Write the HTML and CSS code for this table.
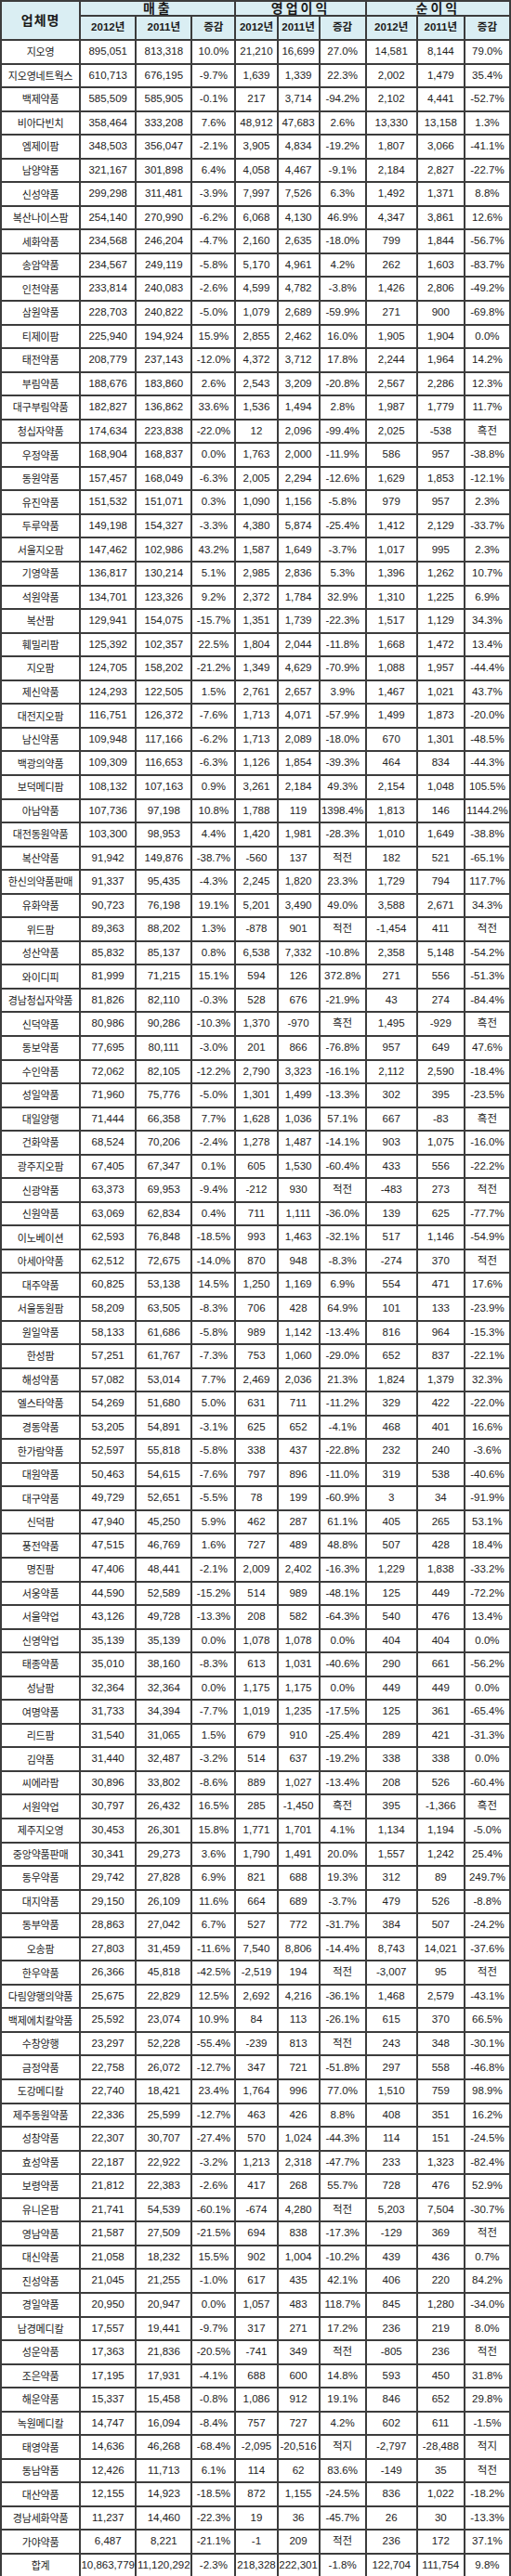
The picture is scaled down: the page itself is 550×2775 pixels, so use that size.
FILE: index.html
```html
<!DOCTYPE html>
<html lang="ko">
<head>
<meta charset="utf-8">
<title>의약품 유통업체 실적</title>
<link rel="stylesheet" href="styles.css">
</head>
<body>
<table class="tbl">
<colgroup>
<col class="c-name"><col class="c-a"><col class="c-a"><col class="c-b"><col class="c-c"><col class="c-c"><col class="c-d"><col class="c-e"><col class="c-f"><col class="c-g">
</colgroup>
<thead>
<tr class="h1"><th rowspan="2" class="hn">업체명</th><th colspan="3" class="hg">매출</th><th colspan="3" class="hg">영업이익</th><th colspan="3" class="hg">순이익</th></tr>
<tr class="h2"><th>2012년</th><th>2011년</th><th>증감</th><th>2012년</th><th>2011년</th><th>증감</th><th>2012년</th><th>2011년</th><th>증감</th></tr>
</thead>
<tbody>
<tr><td class="n">지오영</td><td>895,051</td><td>813,318</td><td>10.0%</td><td>21,210</td><td>16,699</td><td>27.0%</td><td>14,581</td><td>8,144</td><td>79.0%</td></tr>
<tr><td class="n">지오영네트웍스</td><td>610,713</td><td>676,195</td><td>-9.7%</td><td>1,639</td><td>1,339</td><td>22.3%</td><td>2,002</td><td>1,479</td><td>35.4%</td></tr>
<tr><td class="n">백제약품</td><td>585,509</td><td>585,905</td><td>-0.1%</td><td>217</td><td>3,714</td><td>-94.2%</td><td>2,102</td><td>4,441</td><td>-52.7%</td></tr>
<tr><td class="n">비아다빈치</td><td>358,464</td><td>333,208</td><td>7.6%</td><td>48,912</td><td>47,683</td><td>2.6%</td><td>13,330</td><td>13,158</td><td>1.3%</td></tr>
<tr><td class="n">엠제이팜</td><td>348,503</td><td>356,047</td><td>-2.1%</td><td>3,905</td><td>4,834</td><td>-19.2%</td><td>1,807</td><td>3,066</td><td>-41.1%</td></tr>
<tr><td class="n">남양약품</td><td>321,167</td><td>301,898</td><td>6.4%</td><td>4,058</td><td>4,467</td><td>-9.1%</td><td>2,184</td><td>2,827</td><td>-22.7%</td></tr>
<tr><td class="n">신성약품</td><td>299,298</td><td>311,481</td><td>-3.9%</td><td>7,997</td><td>7,526</td><td>6.3%</td><td>1,492</td><td>1,371</td><td>8.8%</td></tr>
<tr><td class="n">복산나이스팜</td><td>254,140</td><td>270,990</td><td>-6.2%</td><td>6,068</td><td>4,130</td><td>46.9%</td><td>4,347</td><td>3,861</td><td>12.6%</td></tr>
<tr><td class="n">세화약품</td><td>234,568</td><td>246,204</td><td>-4.7%</td><td>2,160</td><td>2,635</td><td>-18.0%</td><td>799</td><td>1,844</td><td>-56.7%</td></tr>
<tr><td class="n">송암약품</td><td>234,567</td><td>249,119</td><td>-5.8%</td><td>5,170</td><td>4,961</td><td>4.2%</td><td>262</td><td>1,603</td><td>-83.7%</td></tr>
<tr><td class="n">인천약품</td><td>233,814</td><td>240,083</td><td>-2.6%</td><td>4,599</td><td>4,782</td><td>-3.8%</td><td>1,426</td><td>2,806</td><td>-49.2%</td></tr>
<tr><td class="n">삼원약품</td><td>228,703</td><td>240,822</td><td>-5.0%</td><td>1,079</td><td>2,689</td><td>-59.9%</td><td>271</td><td>900</td><td>-69.8%</td></tr>
<tr><td class="n">티제이팜</td><td>225,940</td><td>194,924</td><td>15.9%</td><td>2,855</td><td>2,462</td><td>16.0%</td><td>1,905</td><td>1,904</td><td>0.0%</td></tr>
<tr><td class="n">태전약품</td><td>208,779</td><td>237,143</td><td>-12.0%</td><td>4,372</td><td>3,712</td><td>17.8%</td><td>2,244</td><td>1,964</td><td>14.2%</td></tr>
<tr><td class="n">부림약품</td><td>188,676</td><td>183,860</td><td>2.6%</td><td>2,543</td><td>3,209</td><td>-20.8%</td><td>2,567</td><td>2,286</td><td>12.3%</td></tr>
<tr><td class="n">대구부림약품</td><td>182,827</td><td>136,862</td><td>33.6%</td><td>1,536</td><td>1,494</td><td>2.8%</td><td>1,987</td><td>1,779</td><td>11.7%</td></tr>
<tr><td class="n">청십자약품</td><td>174,634</td><td>223,838</td><td>-22.0%</td><td>12</td><td>2,096</td><td>-99.4%</td><td>2,025</td><td>-538</td><td>흑전</td></tr>
<tr><td class="n">우정약품</td><td>168,904</td><td>168,837</td><td>0.0%</td><td>1,763</td><td>2,000</td><td>-11.9%</td><td>586</td><td>957</td><td>-38.8%</td></tr>
<tr><td class="n">동원약품</td><td>157,457</td><td>168,049</td><td>-6.3%</td><td>2,005</td><td>2,294</td><td>-12.6%</td><td>1,629</td><td>1,853</td><td>-12.1%</td></tr>
<tr><td class="n">유진약품</td><td>151,532</td><td>151,071</td><td>0.3%</td><td>1,090</td><td>1,156</td><td>-5.8%</td><td>979</td><td>957</td><td>2.3%</td></tr>
<tr><td class="n">두루약품</td><td>149,198</td><td>154,327</td><td>-3.3%</td><td>4,380</td><td>5,874</td><td>-25.4%</td><td>1,412</td><td>2,129</td><td>-33.7%</td></tr>
<tr><td class="n">서울지오팜</td><td>147,462</td><td>102,986</td><td>43.2%</td><td>1,587</td><td>1,649</td><td>-3.7%</td><td>1,017</td><td>995</td><td>2.3%</td></tr>
<tr><td class="n">기영약품</td><td>136,817</td><td>130,214</td><td>5.1%</td><td>2,985</td><td>2,836</td><td>5.3%</td><td>1,396</td><td>1,262</td><td>10.7%</td></tr>
<tr><td class="n">석원약품</td><td>134,701</td><td>123,326</td><td>9.2%</td><td>2,372</td><td>1,784</td><td>32.9%</td><td>1,310</td><td>1,225</td><td>6.9%</td></tr>
<tr><td class="n">복산팜</td><td>129,941</td><td>154,075</td><td>-15.7%</td><td>1,351</td><td>1,739</td><td>-22.3%</td><td>1,517</td><td>1,129</td><td>34.3%</td></tr>
<tr><td class="n">훼밀리팜</td><td>125,392</td><td>102,357</td><td>22.5%</td><td>1,804</td><td>2,044</td><td>-11.8%</td><td>1,668</td><td>1,472</td><td>13.4%</td></tr>
<tr><td class="n">지오팜</td><td>124,705</td><td>158,202</td><td>-21.2%</td><td>1,349</td><td>4,629</td><td>-70.9%</td><td>1,088</td><td>1,957</td><td>-44.4%</td></tr>
<tr><td class="n">제신약품</td><td>124,293</td><td>122,505</td><td>1.5%</td><td>2,761</td><td>2,657</td><td>3.9%</td><td>1,467</td><td>1,021</td><td>43.7%</td></tr>
<tr><td class="n">대전지오팜</td><td>116,751</td><td>126,372</td><td>-7.6%</td><td>1,713</td><td>4,071</td><td>-57.9%</td><td>1,499</td><td>1,873</td><td>-20.0%</td></tr>
<tr><td class="n">남신약품</td><td>109,948</td><td>117,166</td><td>-6.2%</td><td>1,713</td><td>2,089</td><td>-18.0%</td><td>670</td><td>1,301</td><td>-48.5%</td></tr>
<tr><td class="n">백광의약품</td><td>109,309</td><td>116,653</td><td>-6.3%</td><td>1,126</td><td>1,854</td><td>-39.3%</td><td>464</td><td>834</td><td>-44.3%</td></tr>
<tr><td class="n">보덕메디팜</td><td>108,132</td><td>107,163</td><td>0.9%</td><td>3,261</td><td>2,184</td><td>49.3%</td><td>2,154</td><td>1,048</td><td>105.5%</td></tr>
<tr><td class="n">아남약품</td><td>107,736</td><td>97,198</td><td>10.8%</td><td>1,788</td><td>119</td><td>1398.4%</td><td>1,813</td><td>146</td><td>1144.2%</td></tr>
<tr><td class="n">대전동원약품</td><td>103,300</td><td>98,953</td><td>4.4%</td><td>1,420</td><td>1,981</td><td>-28.3%</td><td>1,010</td><td>1,649</td><td>-38.8%</td></tr>
<tr><td class="n">복산약품</td><td>91,942</td><td>149,876</td><td>-38.7%</td><td>-560</td><td>137</td><td>적전</td><td>182</td><td>521</td><td>-65.1%</td></tr>
<tr><td class="n">한신의약품판매</td><td>91,337</td><td>95,435</td><td>-4.3%</td><td>2,245</td><td>1,820</td><td>23.3%</td><td>1,729</td><td>794</td><td>117.7%</td></tr>
<tr><td class="n">유화약품</td><td>90,723</td><td>76,198</td><td>19.1%</td><td>5,201</td><td>3,490</td><td>49.0%</td><td>3,588</td><td>2,671</td><td>34.3%</td></tr>
<tr><td class="n">위드팜</td><td>89,363</td><td>88,202</td><td>1.3%</td><td>-878</td><td>901</td><td>적전</td><td>-1,454</td><td>411</td><td>적전</td></tr>
<tr><td class="n">성산약품</td><td>85,832</td><td>85,137</td><td>0.8%</td><td>6,538</td><td>7,332</td><td>-10.8%</td><td>2,358</td><td>5,148</td><td>-54.2%</td></tr>
<tr><td class="n">와이디피</td><td>81,999</td><td>71,215</td><td>15.1%</td><td>594</td><td>126</td><td>372.8%</td><td>271</td><td>556</td><td>-51.3%</td></tr>
<tr><td class="n">경남청십자약품</td><td>81,826</td><td>82,110</td><td>-0.3%</td><td>528</td><td>676</td><td>-21.9%</td><td>43</td><td>274</td><td>-84.4%</td></tr>
<tr><td class="n">신덕약품</td><td>80,986</td><td>90,286</td><td>-10.3%</td><td>1,370</td><td>-970</td><td>흑전</td><td>1,495</td><td>-929</td><td>흑전</td></tr>
<tr><td class="n">동보약품</td><td>77,695</td><td>80,111</td><td>-3.0%</td><td>201</td><td>866</td><td>-76.8%</td><td>957</td><td>649</td><td>47.6%</td></tr>
<tr><td class="n">수인약품</td><td>72,062</td><td>82,105</td><td>-12.2%</td><td>2,790</td><td>3,323</td><td>-16.1%</td><td>2,112</td><td>2,590</td><td>-18.4%</td></tr>
<tr><td class="n">성일약품</td><td>71,960</td><td>75,776</td><td>-5.0%</td><td>1,301</td><td>1,499</td><td>-13.3%</td><td>302</td><td>395</td><td>-23.5%</td></tr>
<tr><td class="n">대일양행</td><td>71,444</td><td>66,358</td><td>7.7%</td><td>1,628</td><td>1,036</td><td>57.1%</td><td>667</td><td>-83</td><td>흑전</td></tr>
<tr><td class="n">건화약품</td><td>68,524</td><td>70,206</td><td>-2.4%</td><td>1,278</td><td>1,487</td><td>-14.1%</td><td>903</td><td>1,075</td><td>-16.0%</td></tr>
<tr><td class="n">광주지오팜</td><td>67,405</td><td>67,347</td><td>0.1%</td><td>605</td><td>1,530</td><td>-60.4%</td><td>433</td><td>556</td><td>-22.2%</td></tr>
<tr><td class="n">신광약품</td><td>63,373</td><td>69,953</td><td>-9.4%</td><td>-212</td><td>930</td><td>적전</td><td>-483</td><td>273</td><td>적전</td></tr>
<tr><td class="n">신원약품</td><td>63,069</td><td>62,834</td><td>0.4%</td><td>711</td><td>1,111</td><td>-36.0%</td><td>139</td><td>625</td><td>-77.7%</td></tr>
<tr><td class="n">이노베이션</td><td>62,593</td><td>76,848</td><td>-18.5%</td><td>993</td><td>1,463</td><td>-32.1%</td><td>517</td><td>1,146</td><td>-54.9%</td></tr>
<tr><td class="n">아세아약품</td><td>62,512</td><td>72,675</td><td>-14.0%</td><td>870</td><td>948</td><td>-8.3%</td><td>-274</td><td>370</td><td>적전</td></tr>
<tr><td class="n">대주약품</td><td>60,825</td><td>53,138</td><td>14.5%</td><td>1,250</td><td>1,169</td><td>6.9%</td><td>554</td><td>471</td><td>17.6%</td></tr>
<tr><td class="n">서울동원팜</td><td>58,209</td><td>63,505</td><td>-8.3%</td><td>706</td><td>428</td><td>64.9%</td><td>101</td><td>133</td><td>-23.9%</td></tr>
<tr><td class="n">원일약품</td><td>58,133</td><td>61,686</td><td>-5.8%</td><td>989</td><td>1,142</td><td>-13.4%</td><td>816</td><td>964</td><td>-15.3%</td></tr>
<tr><td class="n">한성팜</td><td>57,251</td><td>61,767</td><td>-7.3%</td><td>753</td><td>1,060</td><td>-29.0%</td><td>652</td><td>837</td><td>-22.1%</td></tr>
<tr><td class="n">해성약품</td><td>57,082</td><td>53,014</td><td>7.7%</td><td>2,469</td><td>2,036</td><td>21.3%</td><td>1,824</td><td>1,379</td><td>32.3%</td></tr>
<tr><td class="n">엘스타약품</td><td>54,269</td><td>51,680</td><td>5.0%</td><td>631</td><td>711</td><td>-11.2%</td><td>329</td><td>422</td><td>-22.0%</td></tr>
<tr><td class="n">경동약품</td><td>53,205</td><td>54,891</td><td>-3.1%</td><td>625</td><td>652</td><td>-4.1%</td><td>468</td><td>401</td><td>16.6%</td></tr>
<tr><td class="n">한가람약품</td><td>52,597</td><td>55,818</td><td>-5.8%</td><td>338</td><td>437</td><td>-22.8%</td><td>232</td><td>240</td><td>-3.6%</td></tr>
<tr><td class="n">대원약품</td><td>50,463</td><td>54,615</td><td>-7.6%</td><td>797</td><td>896</td><td>-11.0%</td><td>319</td><td>538</td><td>-40.6%</td></tr>
<tr><td class="n">대구약품</td><td>49,729</td><td>52,651</td><td>-5.5%</td><td>78</td><td>199</td><td>-60.9%</td><td>3</td><td>34</td><td>-91.9%</td></tr>
<tr><td class="n">신덕팜</td><td>47,940</td><td>45,250</td><td>5.9%</td><td>462</td><td>287</td><td>61.1%</td><td>405</td><td>265</td><td>53.1%</td></tr>
<tr><td class="n">풍전약품</td><td>47,515</td><td>46,769</td><td>1.6%</td><td>727</td><td>489</td><td>48.8%</td><td>507</td><td>428</td><td>18.4%</td></tr>
<tr><td class="n">명진팜</td><td>47,406</td><td>48,441</td><td>-2.1%</td><td>2,009</td><td>2,402</td><td>-16.3%</td><td>1,229</td><td>1,838</td><td>-33.2%</td></tr>
<tr><td class="n">서웅약품</td><td>44,590</td><td>52,589</td><td>-15.2%</td><td>514</td><td>989</td><td>-48.1%</td><td>125</td><td>449</td><td>-72.2%</td></tr>
<tr><td class="n">서울약업</td><td>43,126</td><td>49,728</td><td>-13.3%</td><td>208</td><td>582</td><td>-64.3%</td><td>540</td><td>476</td><td>13.4%</td></tr>
<tr><td class="n">신영약업</td><td>35,139</td><td>35,139</td><td>0.0%</td><td>1,078</td><td>1,078</td><td>0.0%</td><td>404</td><td>404</td><td>0.0%</td></tr>
<tr><td class="n">태종약품</td><td>35,010</td><td>38,160</td><td>-8.3%</td><td>613</td><td>1,031</td><td>-40.6%</td><td>290</td><td>661</td><td>-56.2%</td></tr>
<tr><td class="n">성남팜</td><td>32,364</td><td>32,364</td><td>0.0%</td><td>1,175</td><td>1,175</td><td>0.0%</td><td>449</td><td>449</td><td>0.0%</td></tr>
<tr><td class="n">여명약품</td><td>31,733</td><td>34,394</td><td>-7.7%</td><td>1,019</td><td>1,235</td><td>-17.5%</td><td>125</td><td>361</td><td>-65.4%</td></tr>
<tr><td class="n">리드팜</td><td>31,540</td><td>31,065</td><td>1.5%</td><td>679</td><td>910</td><td>-25.4%</td><td>289</td><td>421</td><td>-31.3%</td></tr>
<tr><td class="n">김약품</td><td>31,440</td><td>32,487</td><td>-3.2%</td><td>514</td><td>637</td><td>-19.2%</td><td>338</td><td>338</td><td>0.0%</td></tr>
<tr><td class="n">씨에라팜</td><td>30,896</td><td>33,802</td><td>-8.6%</td><td>889</td><td>1,027</td><td>-13.4%</td><td>208</td><td>526</td><td>-60.4%</td></tr>
<tr><td class="n">서원약업</td><td>30,797</td><td>26,432</td><td>16.5%</td><td>285</td><td>-1,450</td><td>흑전</td><td>395</td><td>-1,366</td><td>흑전</td></tr>
<tr><td class="n">제주지오영</td><td>30,453</td><td>26,301</td><td>15.8%</td><td>1,771</td><td>1,701</td><td>4.1%</td><td>1,134</td><td>1,194</td><td>-5.0%</td></tr>
<tr><td class="n">중앙약품판매</td><td>30,341</td><td>29,273</td><td>3.6%</td><td>1,790</td><td>1,491</td><td>20.0%</td><td>1,557</td><td>1,242</td><td>25.4%</td></tr>
<tr><td class="n">동우약품</td><td>29,742</td><td>27,828</td><td>6.9%</td><td>821</td><td>688</td><td>19.3%</td><td>312</td><td>89</td><td>249.7%</td></tr>
<tr><td class="n">대지약품</td><td>29,150</td><td>26,109</td><td>11.6%</td><td>664</td><td>689</td><td>-3.7%</td><td>479</td><td>526</td><td>-8.8%</td></tr>
<tr><td class="n">동부약품</td><td>28,863</td><td>27,042</td><td>6.7%</td><td>527</td><td>772</td><td>-31.7%</td><td>384</td><td>507</td><td>-24.2%</td></tr>
<tr><td class="n">오송팜</td><td>27,803</td><td>31,459</td><td>-11.6%</td><td>7,540</td><td>8,806</td><td>-14.4%</td><td>8,743</td><td>14,021</td><td>-37.6%</td></tr>
<tr><td class="n">한우약품</td><td>26,366</td><td>45,818</td><td>-42.5%</td><td>-2,519</td><td>194</td><td>적전</td><td>-3,007</td><td>95</td><td>적전</td></tr>
<tr><td class="n">다림양행의약품</td><td>25,675</td><td>22,829</td><td>12.5%</td><td>2,692</td><td>4,216</td><td>-36.1%</td><td>1,468</td><td>2,579</td><td>-43.1%</td></tr>
<tr><td class="n">백제에치칼약품</td><td>25,592</td><td>23,074</td><td>10.9%</td><td>84</td><td>113</td><td>-26.1%</td><td>615</td><td>370</td><td>66.5%</td></tr>
<tr><td class="n">수창양행</td><td>23,297</td><td>52,228</td><td>-55.4%</td><td>-239</td><td>813</td><td>적전</td><td>243</td><td>348</td><td>-30.1%</td></tr>
<tr><td class="n">금정약품</td><td>22,758</td><td>26,072</td><td>-12.7%</td><td>347</td><td>721</td><td>-51.8%</td><td>297</td><td>558</td><td>-46.8%</td></tr>
<tr><td class="n">도강메디칼</td><td>22,740</td><td>18,421</td><td>23.4%</td><td>1,764</td><td>996</td><td>77.0%</td><td>1,510</td><td>759</td><td>98.9%</td></tr>
<tr><td class="n">제주동원약품</td><td>22,336</td><td>25,599</td><td>-12.7%</td><td>463</td><td>426</td><td>8.8%</td><td>408</td><td>351</td><td>16.2%</td></tr>
<tr><td class="n">성창약품</td><td>22,307</td><td>30,707</td><td>-27.4%</td><td>570</td><td>1,024</td><td>-44.3%</td><td>114</td><td>151</td><td>-24.5%</td></tr>
<tr><td class="n">효성약품</td><td>22,187</td><td>22,922</td><td>-3.2%</td><td>1,213</td><td>2,318</td><td>-47.7%</td><td>233</td><td>1,323</td><td>-82.4%</td></tr>
<tr><td class="n">보령약품</td><td>21,812</td><td>22,383</td><td>-2.6%</td><td>417</td><td>268</td><td>55.7%</td><td>728</td><td>476</td><td>52.9%</td></tr>
<tr><td class="n">유니온팜</td><td>21,741</td><td>54,539</td><td>-60.1%</td><td>-674</td><td>4,280</td><td>적전</td><td>5,203</td><td>7,504</td><td>-30.7%</td></tr>
<tr><td class="n">영남약품</td><td>21,587</td><td>27,509</td><td>-21.5%</td><td>694</td><td>838</td><td>-17.3%</td><td>-129</td><td>369</td><td>적전</td></tr>
<tr><td class="n">대신약품</td><td>21,058</td><td>18,232</td><td>15.5%</td><td>902</td><td>1,004</td><td>-10.2%</td><td>439</td><td>436</td><td>0.7%</td></tr>
<tr><td class="n">진성약품</td><td>21,045</td><td>21,255</td><td>-1.0%</td><td>617</td><td>435</td><td>42.1%</td><td>406</td><td>220</td><td>84.2%</td></tr>
<tr><td class="n">경일약품</td><td>20,950</td><td>20,947</td><td>0.0%</td><td>1,057</td><td>483</td><td>118.7%</td><td>845</td><td>1,280</td><td>-34.0%</td></tr>
<tr><td class="n">남경메디칼</td><td>17,557</td><td>19,441</td><td>-9.7%</td><td>317</td><td>271</td><td>17.2%</td><td>236</td><td>219</td><td>8.0%</td></tr>
<tr><td class="n">성운약품</td><td>17,363</td><td>21,836</td><td>-20.5%</td><td>-741</td><td>349</td><td>적전</td><td>-805</td><td>236</td><td>적전</td></tr>
<tr><td class="n">조은약품</td><td>17,195</td><td>17,931</td><td>-4.1%</td><td>688</td><td>600</td><td>14.8%</td><td>593</td><td>450</td><td>31.8%</td></tr>
<tr><td class="n">해운약품</td><td>15,337</td><td>15,458</td><td>-0.8%</td><td>1,086</td><td>912</td><td>19.1%</td><td>846</td><td>652</td><td>29.8%</td></tr>
<tr><td class="n">녹원메디칼</td><td>14,747</td><td>16,094</td><td>-8.4%</td><td>757</td><td>727</td><td>4.2%</td><td>602</td><td>611</td><td>-1.5%</td></tr>
<tr><td class="n">태영약품</td><td>14,636</td><td>46,268</td><td>-68.4%</td><td>-2,095</td><td>-20,516</td><td>적지</td><td>-2,797</td><td>-28,488</td><td>적지</td></tr>
<tr><td class="n">동남약품</td><td>12,426</td><td>11,713</td><td>6.1%</td><td>114</td><td>62</td><td>83.6%</td><td>-149</td><td>35</td><td>적전</td></tr>
<tr><td class="n">대산약품</td><td>12,155</td><td>14,923</td><td>-18.5%</td><td>872</td><td>1,155</td><td>-24.5%</td><td>836</td><td>1,022</td><td>-18.2%</td></tr>
<tr><td class="n">경남세화약품</td><td>11,237</td><td>14,460</td><td>-22.3%</td><td>19</td><td>36</td><td>-45.7%</td><td>26</td><td>30</td><td>-13.3%</td></tr>
<tr><td class="n">가야약품</td><td>6,487</td><td>8,221</td><td>-21.1%</td><td>-1</td><td>209</td><td>적전</td><td>236</td><td>172</td><td>37.1%</td></tr>
<tr><td class="n">합계</td><td>10,863,779</td><td>11,120,292</td><td>-2.3%</td><td>218,328</td><td>222,301</td><td>-1.8%</td><td>122,704</td><td>111,754</td><td>9.8%</td></tr>
</tbody>
</table>
</body>
</html>
```

FILE: styles.css
```css
html, body {
  margin: 0;
  padding: 0;
  background: #ffffff;
}

.tbl {
  border-collapse: collapse;
  table-layout: fixed;
  width: 550px;
  font-family: "Liberation Sans", "Noto Sans CJK KR", sans-serif;
  font-size: 11.5px;
  color: #222222;
}

.c-name { width: 85px; }
.c-a { width: 60px; }
.c-b { width: 47px; }
.c-c { width: 45px; }
.c-d { width: 50px; }
.c-e { width: 55px; }
.c-f { width: 51px; }
.c-g { width: 49px; }

.tbl th,
.tbl td {
  border: 2px solid #3c3c3c;
  padding: 0;
  text-align: center;
  vertical-align: middle;
  white-space: nowrap;
  overflow: visible;
  line-height: 1;
}

.tbl thead th {
  background: #daeef3;
  color: #1a1a1a;
  font-weight: bold;
}

.h1 { height: 15px; }
.h2 { height: 26px; }

.hn {
  font-size: 14px;
  letter-spacing: 1px;
}

.hg {
  font-size: 14px;
  letter-spacing: 3px;
}

.h2 th {
  font-size: 11.5px;
}

.tbl tbody tr {
  height: 25.55px;
}

.tbl td.n {
  font-family: "Noto Sans CJK KR", sans-serif;
  font-size: 11px;
  letter-spacing: -0.2px;
}
```
